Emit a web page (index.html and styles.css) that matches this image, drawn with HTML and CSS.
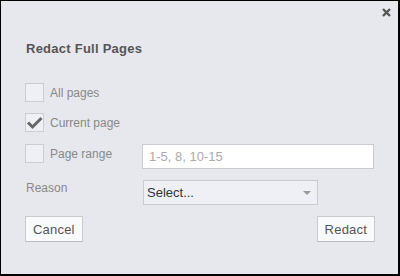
FILE: index.html
```html
<!DOCTYPE html>
<html lang="en">
<head>
    <meta charset="UTF-8">
    <title>Redact Full Pages</title>
    <link rel="stylesheet" href="styles.css">
</head>
<body>
    <div class="dialog">
        <span class="close">
            <svg width="9" height="9" viewBox="0 0 9 9"><path d="M1 1L8 8M8 1L1 8" stroke="#555" stroke-width="2.4"/></svg>
        </span>
        <h1 class="title">Redact Full Pages</h1>

        <div class="row row-all">
            <span class="check"></span>
            <span class="label">All pages</span>
        </div>
        <div class="row row-current">
            <span class="check">
                <svg width="19" height="19" viewBox="0 0 19 19"><path d="M3 9.5L7.5 14L16.5 5" fill="none" stroke="#666" stroke-width="3"/></svg>
            </span>
            <span class="label">Current page</span>
        </div>
        <div class="row row-range">
            <span class="check"></span>
            <span class="label label-range">Page range</span>
            <div class="field">1-5, 8, 10-15</div>
        </div>
        <div class="row row-reason">
            <span class="label label-reason">Reason</span>
            <div class="select">
                <span>Select...</span>
                <span class="arrow"></span>
            </div>
        </div>

        <div class="buttons">
            <button class="btn">Cancel</button>
            <button class="btn">Redact</button>
        </div>
    </div>
</body>
</html>
```

FILE: styles.css
```css
* {
    margin: 0;
    padding: 0;
    box-sizing: border-box;
}

body {
    font-family: "Liberation Sans", Arial, sans-serif;
}

.dialog {
    width: 400px;
    height: 276px;
    background-color: #e7e8ed;
    border: solid #000;
    border-width: 1px 2px 2px 1px;
    padding: 0 23px 0 24px;
    position: relative;
}

.close {
    position: absolute;
    top: 7px;
    right: 7px;
    width: 9px;
    height: 9px;
    line-height: 0;
}

.title {
    font-size: 13px;
    font-weight: bold;
    color: #555;
    letter-spacing: 0.25px;
    line-height: 16px;
    margin-top: 40px;
    padding-left: 1px;
}

.row {
    display: flex;
    align-items: flex-start;
}

.row-all {
    margin-top: 26px;
}

.row-current {
    margin-top: 10px;
}

.row-range {
    margin-top: 11px;
}

.row-reason {
    margin-top: 11px;
}

.check {
    width: 19px;
    height: 19px;
    border: 1px solid #cbcdd3;
    background-color: #eef0f5;
    position: relative;
    line-height: 0;
}

.check svg {
    position: absolute;
    left: -1px;
    top: -1px;
}

.label {
    font-size: 12px;
    color: #888;
    line-height: 20px;
    margin-left: 6px;
}

.label-range {
    width: 92px;
}

.label-reason {
    width: 117px;
    margin-left: 1px;
    line-height: 14px;
    padding-top: 1px;
}

.field {
    width: 232px;
    height: 25px;
    border: 1px solid #c9cbd1;
    background-color: #fff;
    font-size: 13px;
    color: #aaa;
    line-height: 23px;
    padding-left: 6px;
}

.select {
    width: 175px;
    height: 25px;
    border: 1px solid #c9cbd1;
    background-color: #eef0f5;
    font-size: 13px;
    color: #333;
    line-height: 23px;
    padding: 0 6px 0 3px;
    display: flex;
    justify-content: space-between;
    align-items: center;
}

.arrow {
    width: 0;
    height: 0;
    border-left: 4px solid transparent;
    border-right: 4px solid transparent;
    border-top: 4px solid #999;
}

.buttons {
    display: flex;
    justify-content: space-between;
    margin-top: 11px;
}

.btn {
    height: 26px;
    padding: 0 7px;
    font-family: "Liberation Sans", Arial, sans-serif;
    font-size: 13px;
    color: #555;
    background-color: #f9fafc;
    border: 1px solid #c9cbd1;
    border-bottom-color: #b9bbc1;
    letter-spacing: 0.2px;
}
```
